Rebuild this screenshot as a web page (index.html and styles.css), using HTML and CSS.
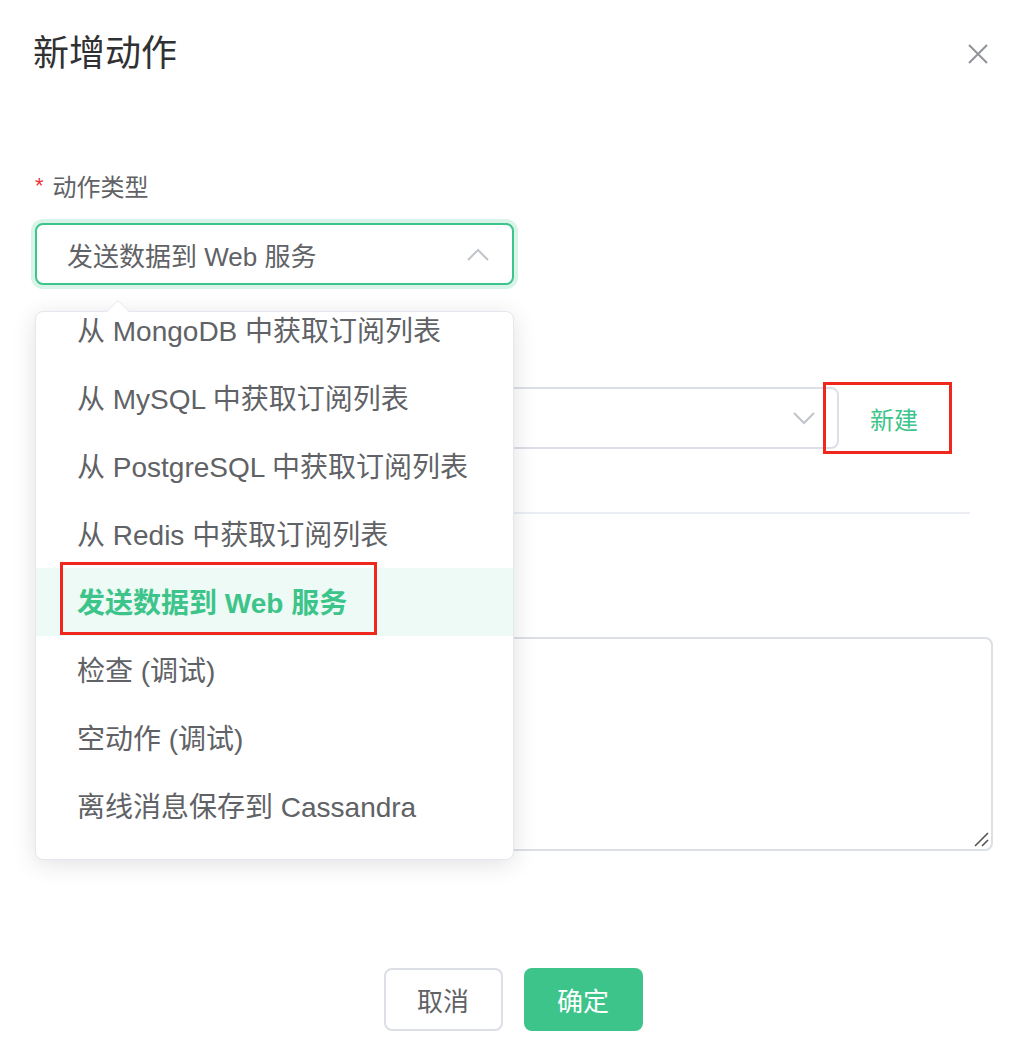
FILE: index.html
```html
<!DOCTYPE html>
<html lang="zh-CN">
<head>
<meta charset="utf-8">
<title>新增动作</title>
<link rel="stylesheet" href="styles.css">
</head>
<body>
<div class="page">
  <div class="dialog">
    <div class="header">
      <div class="title">新增动作</div>
      <svg class="close" width="20" height="20" viewBox="0 0 20 20"><path d="M1 1L19 19M19 1L1 19" stroke="#909399" stroke-width="2" fill="none"/></svg>
    </div>
    <div class="body">
      <div class="item">
        <div class="label"><span class="req">*</span>动作类型</div>
        <div class="select focus">
          <span class="value">发送数据到 Web 服务</span>
          <svg class="chev" width="22" height="13" viewBox="0 0 22 13"><path d="M1 12L11 2L21 12" stroke="#c0c4cc" stroke-width="2" fill="none"/></svg>
        </div>
      </div>
      <div class="item item2">
        <div class="label"></div>
        <div class="row">
          <div class="select wide">
            <span class="value"></span>
            <svg class="chev" width="22" height="13" viewBox="0 0 22 13"><path d="M1 1L11 11L21 1" stroke="#c0c4cc" stroke-width="2" fill="none"/></svg>
          </div>
          <div class="newbtn">新建</div>
        </div>
      </div>
      <div class="divider"></div>
      <div class="item item3">
        <div class="label"></div>
        <div class="textarea">
          <svg class="grip" width="16" height="16" viewBox="0 0 16 16"><path d="M2 15L15 2M9 15L15 9" stroke="#555" stroke-width="1.6" fill="none"/></svg>
        </div>
      </div>
    </div>
    <div class="footer">
      <div class="btn cancel">取消</div>
      <div class="btn ok">确定</div>
    </div>
  </div>

  <div class="dropdown">
    <div class="arrow"></div>
    <div class="list">
      <div class="opt">从 MongoDB 中获取订阅列表</div>
      <div class="opt">从 MySQL 中获取订阅列表</div>
      <div class="opt">从 PostgreSQL 中获取订阅列表</div>
      <div class="opt">从 Redis 中获取订阅列表</div>
      <div class="opt selected">发送数据到 Web 服务</div>
      <div class="opt">检查 (调试)</div>
      <div class="opt">空动作 (调试)</div>
      <div class="opt">离线消息保存到 Cassandra</div>
    </div>
  </div>

  <div class="mark mark-new"></div>
  <div class="mark mark-opt"></div>
</div>
</body>
</html>
```

FILE: styles.css
```css
* { box-sizing: border-box; }
html, body { margin: 0; padding: 0; background: #fff; }
body {
  font-family: "Liberation Sans", "Noto Sans CJK SC", sans-serif;
  color: #606266;
}
.page { position: relative; width: 1026px; height: 1060px; overflow: hidden; }

.dialog { padding-top: 30px; }
.header {
  display: flex; justify-content: space-between; align-items: center;
  height: 48px; padding: 0 38px 0 33px;
}
.title { font-size: 36px; line-height: 48px; color: #303133; }
.close { display: block; }

.body { padding-left: 35px; margin-top: 94px; }
.label { font-size: 24px; line-height: 32px; height: 32px; color: #606266; display: flex; align-items: center; }
.req { color: #f0343a; font-size: 22px; margin-right: 9px; position: relative; top: -2px; }

.select {
  margin-top: 19px;
  width: 479px; height: 62px;
  border: 2px solid #dcdfe6; border-radius: 8px;
  display: flex; align-items: center; justify-content: space-between;
  padding: 0 23px 0 30px; background: #fff;
}
.select.focus { border-color: #3cc48a; box-shadow: 0 0 0 4px rgba(60,196,138,0.2); }
.value { font-size: 26px; color: #606266; }
.chev { display: block; }

.item2 { margin-top: 51px; }
.row { display: flex; align-items: center; margin-top: 19px; }
.row .select { margin-top: 0; width: 804px; padding-right: 22px; }
.newbtn { width: 110px; text-align: center; font-size: 24px; color: #3cc48a; }

.divider { width: 935px; height: 2px; background: #ebeef5; margin-top: 63px; }

.item3 { margin-top: 72px; }
.textarea {
  position: relative; margin-top: 19px;
  width: 958px; height: 214px;
  border: 2px solid #dcdfe6; border-radius: 8px;
}
.grip { position: absolute; right: 2px; bottom: 2px; }

.footer { display: flex; justify-content: center; gap: 21px; margin-top: 117px; }
.btn {
  width: 119px; height: 63px; border-radius: 8px;
  display: flex; align-items: center; justify-content: center;
  font-size: 26px;
}
.cancel { border: 2px solid #dcdfe6; color: #606266; background: #fff; }
.ok { background: #3cc48a; color: #fff; }

.dropdown {
  position: absolute; left: 35px; top: 311px;
  width: 479px; height: 549px;
  border: 1px solid #e4e7ed; border-radius: 8px; background: #fff;
  box-shadow: 0 4px 24px rgba(0,0,0,0.12);
}
.dropdown .list { height: 100%; overflow: hidden; border-radius: 8px; }
.dropdown .list .opt:first-child { margin-top: -16px; }
.arrow {
  position: absolute; top: -12px; left: 70px;
  width: 0; height: 0;
  border-left: 12px solid transparent; border-right: 12px solid transparent;
  border-bottom: 12px solid #e4e7ed;
}
.arrow::after {
  content: ""; position: absolute; left: -11px; top: 1px;
  border-left: 11px solid transparent; border-right: 11px solid transparent;
  border-bottom: 11px solid #fff;
}
.opt {
  height: 68px; line-height: 64px; padding: 4px 0 0 41px;
  font-size: 28px; color: #606266; white-space: nowrap;
}
.opt.selected { background: #eefaf5; color: #3cc48a; font-weight: 700; }

.mark { position: absolute; border: 3px solid #f0271d; }
.mark-new { left: 823px; top: 382px; width: 129px; height: 72px; }
.mark-opt { left: 60px; top: 562px; width: 317px; height: 73px; }
```
